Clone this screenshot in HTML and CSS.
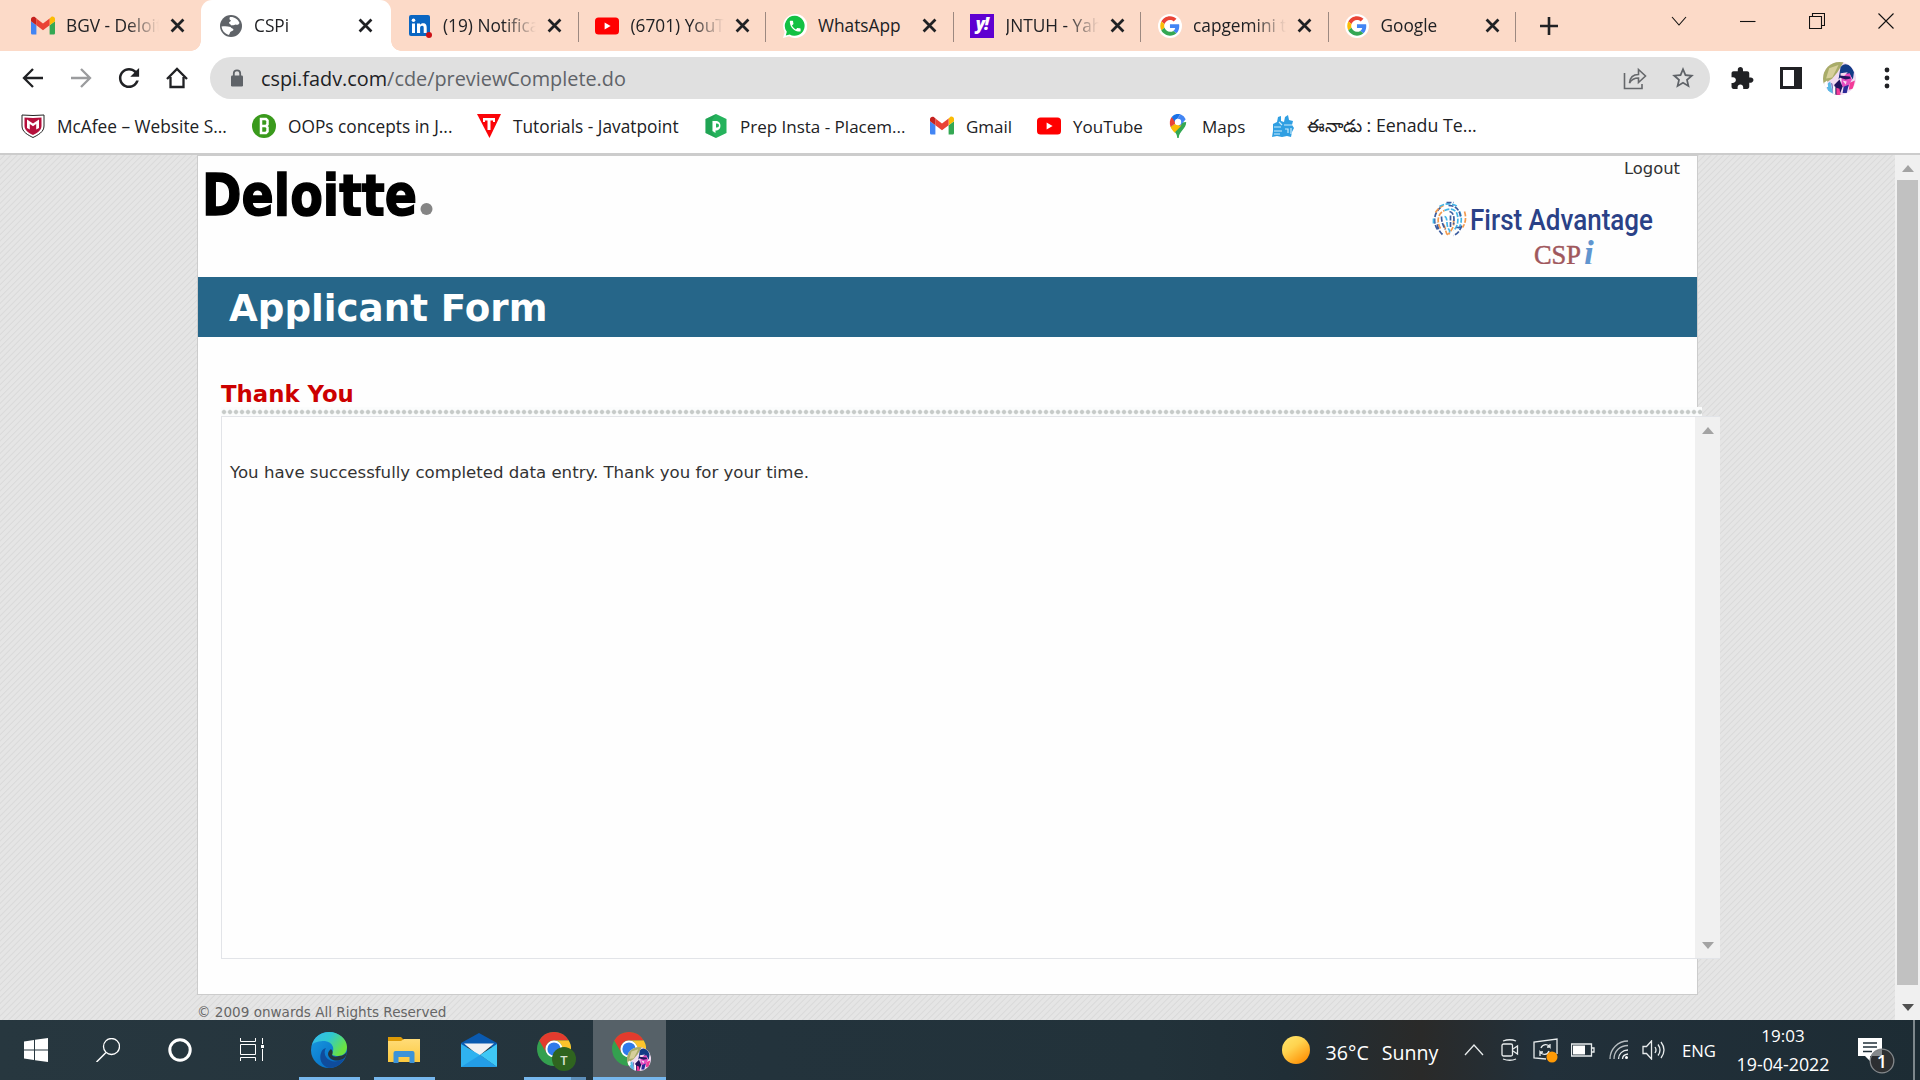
FILE: index.html
```html
<!DOCTYPE html>
<html lang="en">
<head>
<meta charset="utf-8">
<title>CSPi</title>
<link rel="stylesheet" href="styles.css">
</head>
<body>
<svg class="defs" aria-hidden="true">
  <defs>
    <linearGradient id="edge-blue" x1="0" y1="0" x2="1" y2="1"><stop offset="0" stop-color="#1b9de2"/><stop offset="1" stop-color="#0062be"/></linearGradient>
    <linearGradient id="edge-top" x1="0" y1="0" x2="1" y2=".5"><stop offset="0" stop-color="#35b8f0"/><stop offset=".5" stop-color="#30c8cf"/><stop offset="1" stop-color="#6be33f"/></linearGradient>
    <linearGradient id="sun" x1=".1" y1="0" x2=".8" y2="1"><stop offset="0" stop-color="#ffe46a"/><stop offset=".4" stop-color="#ffd34f"/><stop offset="1" stop-color="#ff8c00"/></linearGradient>
    <linearGradient id="folder" x1="0" y1="0" x2="0" y2="1"><stop offset="0" stop-color="#ffdc78"/><stop offset="1" stop-color="#fcc93f"/></linearGradient>
    <clipPath id="round"><circle cx="16" cy="16" r="16"/></clipPath>
    <symbol id="gmail" viewBox="0 0 24 24">
      <path fill="#4285f4" d="M1.6 20.6h3.8v-9.3L0 7.2V19c0 .9.7 1.6 1.6 1.6z"/>
      <path fill="#34a853" d="M18.6 20.6h3.8c.9 0 1.6-.7 1.6-1.6V7.2l-5.4 4.1z"/>
      <path fill="#fbbc04" d="M18.6 4.6v6.7L24 7.2V5.1c0-2-2.3-3.2-3.9-2z"/>
      <path fill="#ea4335" d="M5.4 11.3V4.6L12 9.5l6.6-4.9v6.7L12 16.3z"/>
      <path fill="#c5221f" d="M0 5.1v2.1l5.4 4.1V4.6L3.9 3.1C2.300 2 0 3.100 0 5.100z"/>
    </symbol>
    <symbol id="youtube" viewBox="0 0 24 24"><rect y="3.600" width="24" height="16.800" rx="3.500" fill="#f00"/><path fill="#fff" d="M9.600 8.500v7l6-3.500z"/></symbol>
    <symbol id="google" viewBox="0 0 48 48">
      <circle cx="24" cy="24" r="24" fill="#fff"/>
      <g transform="translate(4.500 4.500) scale(.81)">
      <path fill="#ea4335" d="M24 9.500c3.540 0 6.710 1.220 9.210 3.600l6.850-6.850C35.900 2.380 30.470 0 24 0 14.620 0 6.510 5.380 2.560 13.220l7.980 6.190C12.430 13.720 17.740 9.500 24 9.500z"/>
      <path fill="#4285f4" d="M46.980 24.550c0-1.570-.15-3.090-.38-4.550H24v9.020h12.940c-.58 2.960-2.260 5.480-4.780 7.180l7.730 6c4.510-4.180 7.090-10.360 7.090-17.650z"/>
      <path fill="#fbbc05" d="M10.530 28.590c-.48-1.450-.76-2.990-.76-4.590s.27-3.140.76-4.590l-7.980-6.190C.92 16.460 0 20.120 0 24c0 3.880.92 7.540 2.560 10.780l7.970-6.190z"/>
      <path fill="#34a853" d="M24 48c6.480 0 11.930-2.130 15.890-5.810l-7.730-6c-2.150 1.450-4.920 2.300-8.160 2.300-6.260 0-11.570-4.220-13.470-9.910l-7.980 6.190C6.510 42.620 14.620 48 24 48z"/>
      </g>
    </symbol>
    <symbol id="close" viewBox="0 0 16 16"><path d="M3 3l10 10M13 3L3 13" stroke="#202124" stroke-width="2.300" fill="none"/></symbol>
    <symbol id="avatar" viewBox="0 0 32 32">
      <g clip-path="url(#round)">
        <rect width="32" height="32" fill="#f1dcf2"/>
        <path fill="#a8ac68" d="M0 0h20l-6 10-5 6-9 6z"/>
        <path fill="#d6cf9b" d="M6 6l9-3-6 12-6 1z"/>
        <path fill="#123b86" d="M17 5c4-6 11-2 13 5l-1 7-3-5-8 1-3 4z"/>
        <path fill="#e54cc0" d="M18 12l8-1 2 6-4 8-6-1z"/>
        <path fill="#f6d9ef" d="M17 11l7-1-3 3-4 2zM19 18l4 1-1 3z"/>
        <path fill="#21145f" d="M16 13l10 1 1 2-5 1-6-2zM11 22l5-5 3 7-3 8h-5z"/>
        <path fill="#59b8e6" d="M3 22l4-3 3 13H6z"/>
        <path fill="#2b2a98" d="M8 20l2 12-1-11zM20 24l5-2-2 8h-4z"/>
        <path fill="#f43b98" d="M26 20l5-2-2 8-4 1zM13 25l3 1 1 6h-4z"/>
        <path fill="#fff" d="M1 20l3-2 1 6-3 1zM10 23l2 1v8h-2z"/>
      </g>
    </symbol>
    <symbol id="chrome" viewBox="0 0 36 36">
      <circle cx="18" cy="18" r="18" fill="#34a04f"/>
      <path fill="#e33b2e" d="M2.400 9A18 18 0 0 1 33.600 9H18a9 9 0 0 0-7.800 13.500z"/>
      <path fill="#fdc42c" d="M33.600 9A18 18 0 0 1 18 36l7.800-13.500A9 9 0 0 0 18 9z"/>
      <circle cx="18" cy="18" r="9" fill="#fff"/><circle cx="18" cy="18" r="7" fill="#2e7bea"/>
    </symbol>
  </defs>
</svg>

<header class="browser">
  <div class="tab-strip">
    <div class="tab first"><svg class="fav"><use href="#gmail"/></svg><span class="title">BGV - Deloitte</span><svg class="x"><use href="#close"/></svg></div>
    <div class="tab active"><svg class="fav" viewBox="0 0 24 24"><circle cx="12" cy="12" r="11" fill="#5f6368"/><path fill="#fff" d="M11 3c4-.5 8 2 9.500 6-1 2-2.500 2-4 1.500-1.500 1-3 .5-4 1-.5-1.500-2.500-1-2.500-3 .5-1 2-1 2-2-1.500-.5-2-2-1-3.500zM2.500 12.500c3-.5 6-.5 9 .5 1 1.500 3 1.500 3 3-1 1.500-3 1-3.500 2.500-.5 1.500-.5 2-1.500 2.500-4-1.500-6.500-4.500-7-8.500z"/></svg><span class="title">CSPi</span><svg class="x"><use href="#close"/></svg></div>
    <div class="tab ruled"><svg class="fav" viewBox="0 0 24 24"><rect x="1" y="1" width="21" height="21" rx="2" fill="#0a66c2"/><path fill="#fff" d="M4 9.500h3V19H4zM9 9.500h3v1.300c.6-1 1.700-1.600 3-1.600 3 0 3.700 2 3.700 4.600V19h-3v-4.700c0-1.200 0-2.500-1.600-2.500s-2 1.200-2 2.400V19H9z"/><circle cx="5.500" cy="6.200" r="1.800" fill="#fff"/><circle cx="21" cy="21" r="3" fill="#cc1016"/></svg><span class="title">(19) Notifications</span><svg class="x"><use href="#close"/></svg></div>
    <div class="tab ruled"><svg class="fav"><use href="#youtube"/></svg><span class="title">(6701) YouTube</span><svg class="x"><use href="#close"/></svg></div>
    <div class="tab ruled"><svg class="fav" viewBox="0 0 24 24"><path fill="#fff" d="M12 0a12 12 0 1 1-5.800 22.300L0 24l1.700-6A12 12 0 0 1 12 0z"/><path fill="#12c143" d="M12 1.800a10 10 0 1 1-5.300 18.700L2.800 21.400l1-3.700A10 10 0 0 1 12 1.800z"/><path fill="#fff" transform="translate(5 5) scale(.6)" d="M6.620 10.790c1.440 2.830 3.760 5.140 6.590 6.590l2.200-2.200c.27-.27.67-.36 1.020-.24 1.120.37 2.330.57 3.570.57.55 0 1 .45 1 1V20c0 .55-.45 1-1 1-9.390 0-17-7.610-17-17 0-.55.45-1 1-1h3.500c.55 0 1 .45 1 1 0 1.250.2 2.450.57 3.570.11.35.03.74-.25 1.020z"/></svg><span class="title whole">WhatsApp</span><svg class="x"><use href="#close"/></svg></div>
    <div class="tab ruled"><span class="fav yahoo">y!</span><span class="title">JNTUH - Yahoo</span><svg class="x"><use href="#close"/></svg></div>
    <div class="tab ruled"><svg class="fav"><use href="#google"/></svg><span class="title">capgemini test</span><svg class="x"><use href="#close"/></svg></div>
    <div class="tab ruled"><svg class="fav"><use href="#google"/></svg><span class="title">Google</span><svg class="x"><use href="#close"/></svg></div>
    <div class="new-tab"><svg width="20" height="20" viewBox="0 0 20 20"><path d="M10 1v18M1 10h18" stroke="#202124" stroke-width="2.600"/></svg></div>
    <div class="window-controls">
      <svg viewBox="0 0 16 16"><path d="M1 4l7 8 7-8"/></svg>
      <svg viewBox="0 0 16 16"><path d="M0 8.500h15.500"/></svg>
      <svg viewBox="0 0 16 16"><path d="M.5 3.500h12v12H.5zM3.500 3.500v-3h12v12h-3"/></svg>
      <svg viewBox="0 0 16 16"><path d="M.5 .5l15 15M15.500 .5l-15 15"/></svg>
    </div>
  </div>

  <div class="toolbar">
    <nav class="nav-buttons">
      <svg viewBox="0 0 24 24"><path d="M22 12H3M12 3l-9 9 9 9" fill="none" stroke="#202124" stroke-width="2.300"/></svg>
      <svg viewBox="0 0 24 24"><path d="M2 12h19M12 3l9 9-9 9" fill="none" stroke="#9b9c9e" stroke-width="2.300"/></svg>
      <svg viewBox="2.500 2.500 19 19"><path fill="#202124" d="M17.650 6.350C16.200 4.900 14.210 4 12 4c-4.420 0-7.990 3.580-7.990 8s3.570 8 7.990 8c3.730 0 6.840-2.550 7.730-6h-2.080c-.82 2.330-3.040 4-5.650 4-3.310 0-6-2.690-6-6s2.690-6 6-6c1.660 0 3.140.69 4.220 1.780L13 11h7V4l-2.350 2.350z"/></svg>
      <svg viewBox="0 0 24 24"><path d="M2 13L12 3l10 10M5.500 11v10h13V11" fill="none" stroke="#202124" stroke-width="2.300"/></svg>
    </nav>
    <div class="omnibox">
      <svg class="lock" viewBox="0 0 14 18"><rect x="1" y="6.500" width="12" height="11" rx="1.300" fill="#5f6368"/><path d="M3.800 7V4.500a3.200 3.200 0 0 1 6.400 0V7" fill="none" stroke="#5f6368" stroke-width="1.800"/></svg>
      <span class="url"><b>cspi.fadv.com</b>/cde/previewComplete.do</span>
      <svg class="ob-icon" viewBox="0 0 24 24"><path d="M1.500 7v15.500H19V18M6.500 17C7 11 11 8.500 15.500 8.500v-5L22.500 10l-7 6.500v-4.500C11.500 12 8.500 13.500 6.500 17z" fill="none" stroke="#66686b" stroke-width="1.600"/></svg>
      <svg class="ob-icon" viewBox="1 1 22 22"><path fill="#5f6368" d="M22 9.240l-7.190-.62L12 2 9.190 8.630 2 9.240l5.460 4.730L5.820 21 12 17.270 18.180 21l-1.630-7.030L22 9.240zM12 15.400l-3.760 2.270 1-4.280-3.320-2.880 4.380-.38L12 6.100l1.710 4.040 4.380.38-3.320 2.880 1 4.280L12 15.400z"/></svg>
    </div>
    <div class="actions">
      <svg viewBox="1.500 0 23 23"><path fill="#202124" d="M20.500 11H19V7c0-1.100-.9-2-2-2h-4V3.500C13 2.120 11.880 1 10.500 1S8 2.120 8 3.500V5H4c-1.100 0-1.990.9-1.990 2v3.800H3.500c1.490 0 2.700 1.210 2.700 2.700s-1.210 2.700-2.700 2.700H2V20c0 1.100.9 2 2 2h3.800v-1.500c0-1.490 1.210-2.700 2.700-2.700 1.490 0 2.700 1.210 2.700 2.700V22H17c1.100 0 2-.9 2-2v-4h1.500c1.380 0 2.500-1.120 2.500-2.500S21.880 11 20.500 11z"/></svg>
      <svg viewBox="0 0 24 24"><path fill="#202124" d="M1 1h22v22H1zM4 4v16h11V4z" fill-rule="evenodd"/></svg>
      <svg class="me"><use href="#avatar"/></svg>
      <svg viewBox="0 0 24 24"><g fill="#202124"><circle cx="12" cy="4" r="2.400"/><circle cx="12" cy="12" r="2.400"/><circle cx="12" cy="20" r="2.400"/></g></svg>
    </div>
  </div>

  <div class="bookmarks">
    <a><svg viewBox="0 0 24 24"><path fill="#fff" stroke="#222" d="M1 1q11 1 22 0v11c0 6-6 9-11 11.500C7 21 1 18 1 12z"/><path fill="#b5103c" d="M3.500 3.500q8.500.8 17 0V12c0 4.500-4.500 7-8.500 9-4-2-8.500-4.500-8.500-9z"/><path fill="#fff" d="M6 14V5.500l6 4 6-4V14l-2.800 1.500V10L12 12.200 8.800 10v5.500z"/></svg><span>McAfee – Website S...</span></a>
    <a><svg viewBox="0 0 24 24"><circle cx="12" cy="12" r="12" fill="#3a9a1c"/><path fill="none" stroke="#fff" stroke-width="2.500" d="M9 5h5l1.500 1.500v4L14 12l1.500 1.500v4L14 19H9zM9 12h5"/></svg><span>OOPs concepts in J...</span></a>
    <a><svg viewBox="0 0 24 24"><path fill="#fb0509" d="M0 0h24L12.500 24z"/><path fill="#fff" d="M6 4h12v4h-2V6.500h-2.500V16h-3V6.500H8V8H6z"/></svg><span>Tutorials - Javatpoint</span></a>
    <a><svg viewBox="0 0 24 24"><path fill="#25b35c" d="M12 0l10.500 5v14L12 24 1.500 19V5z"/><path fill="#178a45" d="M12 0L1.500 5v14L12 24l-4-6V6z" opacity=".35"/><path fill="#fff" fill-rule="evenodd" d="M8.500 7h4.500a5 5 0 0 1 0 9.500h-1.500V19l-3-2zm3.500 2.500v4h1a2 2 0 0 0 0-4z"/></svg><span class="snug">Prep Insta - Placem...</span></a>
    <a><svg><use href="#gmail"/></svg><span class="snug">Gmail</span></a>
    <a><svg><use href="#youtube"/></svg><span class="snug">YouTube</span></a>
    <a><svg viewBox="0 0 24 24"><path fill="#34a853" d="M4.500 12.500C7 17 11 18 11.300 24h1.400c.3-7 7.500-9 7.500-16L12 9z"/><path fill="#fbbc04" d="M4.500 12.700L16 6l-1 6-6.500 6.800c-1.500-2-3-3.800-4-6.100z"/><path fill="#ea4335" d="M5.700 3L12 8l-7.500 4.700C3.300 9.600 3.600 5.500 5.700 3z"/><path fill="#1a73e8" d="M5.700 3a8.400 8.400 0 0 1 8.800-2.700L9 8z"/><path fill="#4285f4" d="M14.500.3a8.400 8.400 0 0 1 5.200 5L14 12 9 8z"/><circle cx="12" cy="8" r="3.200" fill="#fff"/></svg><span class="snug">Maps</span></a>
    <a><svg viewBox="0 0 24 24"><path fill="#2f9fe2" d="M2 10l4-2 1-5 3-1v5l3 1 1-5 3-2 1 5 4 1-1 4 2 3-2 4-1 5-4-1-5 1-5-1-5 1 1-6z"/><g fill="none" stroke="#c9ecfb" stroke-width="1.200"><path d="M3 13h7M3 17h8M3 20h6M8 8l3 3M13 11h8M14 15h3v4M20 14v6"/></g></svg><span class="telugu">ఈనాడు : Eenadu Te...</span></a>
  </div>
</header>

<div class="viewport">
  <main class="page">
    <section class="sheet">
      <div class="masthead">
        <svg class="deloitte" width="240" height="50" viewBox="0 0 240 50"><text x="-1" y="45" textLength="215" lengthAdjust="spacingAndGlyphs">Deloitte</text><circle cx="223.500" cy="39" r="6" fill="#858585"/></svg>
        <div class="right">
          <a class="logout">Logout</a>
          <svg class="fadv" width="230" height="67" viewBox="0 0 230 67">
            <g fill="none" stroke-width="1.700" stroke-dasharray="5 1.500" transform="translate(-1.500 1.500)">
              <path stroke="#3b5c9f" d="M8 31a13 15 0 0 1 3-22M13 36a15 15 0 0 1-5-12M32 27a12 14 0 0 1-8 10"/>
              <path stroke="#f39a4d" d="M6 14a16 16 0 0 1 8-7M11 30c-4-7-3-15 4-18M24 22c1 8-3 10-5 14M35 13c2 6 1 12-2 16M14 26c3 4 1 8 5 11"/>
              <path stroke="#43b5e8" d="M15 12c6-3 12-1 13 5s0 12-4 15M10 8c6-4 14-3 18 0M15 18c3 0 2 6 3 10s3 3 2 6M30 13c3 6 2 13-1 17M4 20v6"/>
              <path stroke="#3b5c9f" d="M19 7c8 0 11 5 12 11M20 13c5 1 5 8 4 13M12 18c0 6 2 10 4 13M21 17v12M17 4h7M27 29h6"/>
            </g>
            <text class="fa" x="39" y="33" textLength="183" lengthAdjust="spacingAndGlyphs">First Advantage</text>
            <text class="csp" x="103" y="66.500" textLength="47" lengthAdjust="spacingAndGlyphs">CSP</text>
            <text class="csp-i" x="153" y="68">i</text>
          </svg>
        </div>
      </div>
      <h1>Applicant Form</h1>
      <h2>Thank You</h2>
      <div class="dots"></div>
      <div class="panel">
        <p>You have successfully completed data entry. Thank you for your time.</p>
        <div class="scrollbar idle"><svg viewBox="0 0 12 7"><path d="M6 0l6 7H0z"/></svg><svg viewBox="0 0 12 7"><path d="M0 0h12L6 7z"/></svg></div>
      </div>
    </section>
    <footer>© 2009 onwards All Rights Reserved</footer>
  </main>
  <div class="scrollbar"><svg viewBox="0 0 12 7"><path d="M6 0l6 7H0z"/></svg><div class="thumb"></div><svg class="dark" viewBox="0 0 12 7"><path d="M0 0h12L6 7z"/></svg></div>
</div>

<footer class="taskbar">
  <div class="apps">
    <div><svg width="24" height="24" viewBox="0 0 24 24"><path fill="#fff" d="M0 3.400l10-1.400v9.500H0zM11 1.800L24 0v11.500H11zM0 12.500h10V22L0 20.600zM11 12.500h13V24l-13-1.800z"/></svg></div>
    <div><svg width="24" height="24" viewBox="0 0 24 24"><circle cx="15.500" cy="8.500" r="8" fill="none" stroke="#fff" stroke-width="1.300"/><path d="M10 14.500L.5 24" stroke="#fff" stroke-width="1.500"/></svg></div>
    <div><svg width="26" height="26" viewBox="0 0 26 26"><circle cx="13" cy="13" r="10.200" fill="none" stroke="#fff" stroke-width="3"/></svg></div>
    <div><svg width="24" height="24" viewBox="0 0 24 24"><path fill="none" stroke="#fff" d="M.5 0v3.500h15V0M.5 6.500h15v10H.5zM.5 23v-3.500h15V23M22.500 0v6M22.500 11v12"/><path fill="#fff" d="M21 7h3v3h-3z"/></svg></div>
    <div class="running"><svg width="36" height="36" viewBox="0 0 36 36"><circle cx="18" cy="18" r="18" fill="url(#edge-blue)"/><path fill="#0f4c9c" d="M14 18c-2 8 6 13 13 11 3-1 5-2 6-2-3 6-9 9-15 9-8-2-10-10-8-15 1-3 2-4 5-5z"/><path fill="url(#edge-top)" d="M1 13C3 5 10 0 18 0c10 0 18 7 18 15 0 6-4 9-9 9-4 0-7-1-6-3 3-4 1-11-7-12C8 9 3 10 1 13z"/><path fill="#25353e" d="M20 17c2 2 2 4 1 6 1 2 4 2 7 1 4 0 6-2 8-4-1 4-2 6-4 7-3 1-7 3-12 0-4-3-4-7 0-10z"/></svg></div>
    <div class="running"><svg width="32" height="28" viewBox="0 0 32 28"><path fill="#dd9a06" d="M0 1h13l3 3-2 3H0z"/><path fill="url(#folder)" d="M0 5h13l3-2h16v23H0z"/><path fill="#3c93d8" d="M5.500 27V17a2 2 0 0 1 2-2h17a2 2 0 0 1 2 2v10h-5v-6h-11v6z"/></svg></div>
    <div><svg width="36" height="34" viewBox="0 0 36 34"><path fill="#0a5ab0" d="M0 10L18 0l18 10v4H0z"/><path fill="#f1f1f3" d="M3 10.500h30L18 23z"/><path fill="#2fb2f0" d="M0 11l19 11 17 12H0z"/><path fill="#3fc8f5" d="M36 11L19 22l17 12z"/><path fill="#1c90e0" d="M0 34h36L19 22z" opacity=".6"/></svg></div>
    <div class="running stacked"><svg width="39" height="39" viewBox="0 0 39 39"><use href="#chrome" width="34" height="34"/><circle cx="27" cy="27" r="12" fill="#2f641f"/><text x="27" y="32.500" text-anchor="middle">T</text></svg></div>
    <div class="running current"><svg width="39" height="39" viewBox="0 0 39 39"><use href="#chrome" width="34" height="34"/><use href="#avatar" x="15" y="15" width="24" height="24"/></svg></div>
  </div>
  <div class="tray">
    <svg width="28" height="28" viewBox="0 0 28 28"><circle cx="14" cy="14" r="14" fill="url(#sun)" stroke="none"/></svg>
    <div class="weather"><span>36°C</span><span>Sunny</span></div>
    <svg width="20" height="12" viewBox="0 0 20 12"><path d="M1 11l9-10 9 10"/></svg>
    <svg width="18" height="22" viewBox="0 0 18 22"><rect x="1" y="5" width="10.500" height="12" rx="1.500"/><path d="M12 10l4.500-3v8L12 12M2 2q7-2.500 13 0M2 20q7 2.500 13 0"/></svg>
    <svg width="26" height="26" viewBox="0 0 26 26"><path d="M13 22L1 21V5l23-3v15M8 11a5 5 0 0 1 9-1v-3M17 10h-3M16 14a5 5 0 0 1-9 1v4M7 15h3"/><circle cx="19" cy="20" r="5.500" fill="#ff9a05" stroke="none"/></svg>
    <svg width="24" height="14" viewBox="0 0 24 14"><path d="M.5 1h20v12H.5zM21 5h2v4h-2"/><path fill="#fff" stroke="none" d="M2 2.500h12v9H2z"/></svg>
    <svg width="20" height="20" viewBox="0 0 20 20"><path opacity=".75" d="M1 19C1 9 9 1 19 1M5 19C5 11 11 5.500 19 5.500"/><path d="M9.500 19c0-5 4-9 9.500-9M13.500 19c0-2.500 2-4.500 5.500-5"/><circle cx="17.500" cy="17.500" r="1.500" fill="#fff" stroke="none"/></svg>
    <svg width="24" height="20" viewBox="0 0 24 20"><path d="M1 6.500h3.500L9.500 1v18l-5-5.500H1zM13 7q2 3 0 6M16 4.500q4 5.500 0 11M19 2q6 8 0 16"/></svg>
    <span class="lang">ENG</span>
    <div class="clock"><span class="time">19:03</span><span>19-04-2022</span></div>
    <svg class="notes" width="38" height="40" viewBox="0 0 38 40"><path fill="#fff" stroke="none" d="M1 4h24v18H13v5l-5-5H1z"/><path stroke="#22313a" d="M6 9h14M6 13h14M6 17.500h9"/><circle cx="25" cy="27" r="11.800" fill="#2d2f31" stroke="#85898c"/><path fill="#85898c" stroke="none" d="M25 15.500V22H14q3-6 11-6.500z"/><text x="25" y="33.500" text-anchor="middle">1</text></svg>
    <div class="show-desktop"></div>
  </div>
</footer>
</body>
</html>
```
FILE: styles.css
```css
* { box-sizing: border-box; }
body {
  margin: 0;
  width: 1920px;
  height: 1080px;
  overflow: hidden;
  display: flex;
  flex-direction: column;
  font-family: "Open Sans", "Noto Sans", sans-serif;
  font-size: 17.3px;
  color: #202124;
  background: #fff;
}
svg { display: block; flex: none; }
.defs { position: absolute; width: 0; height: 0; }

/* tab strip */
.browser { height: 155px; border-bottom: 2px solid #ccc; }
.tab-strip { display: flex; height: 51px; padding-left: 14px; background: #fcdac8; }
.tab { position: relative; display: flex; flex: none; align-items: center; width: 187.500px; padding-left: 17.500px; }
.first { padding-left: 16.500px; }
.fav { width: 24px; height: 24px; margin-right: 11.500px; }
.title {
  width: 93px;
  overflow: hidden;
  white-space: nowrap;
  -webkit-mask-image: linear-gradient(90deg, #000 65%, transparent);
  mask-image: linear-gradient(90deg, #000 65%, transparent);
}
.whole { -webkit-mask-image: none; mask-image: none; }
.x { width: 19px; height: 19px; margin-left: 9px; }
.ruled::after { content: ""; position: absolute; right: -1px; top: 12px; width: 1px; height: 30px; background: #9c8880; }
.active { background: #fff; border-radius: 11px 11px 0 0; width: 190px; margin-left: -.5px; margin-right: -1px; }
.active::before, .active::after { content: ""; position: absolute; bottom: 0; width: 10px; height: 10px; }
.active::before { left: -10px; background: radial-gradient(circle at 0 0, transparent 9.500px, #fff 10px); }
.active::after { right: -10px; background: radial-gradient(circle at 100% 0, transparent 9.500px, #fff 10px); }
.yahoo { background: #5f01d1; color: #fff; font-weight: 800; font-size: 17px; line-height: 19px; text-align: center; font-style: italic; letter-spacing: -1px; }
.new-tab { display: flex; align-items: center; width: 60px; padding-left: 24px; }
.window-controls { display: flex; gap: 53px; margin: 13px 26px 0 auto; }
.window-controls svg { width: 16px; height: 16px; fill: none; stroke: #111; stroke-width: 1.100; }

/* toolbar */
.toolbar { display: flex; align-items: center; height: 54px; }
.nav-buttons { display: flex; gap: 24px; padding-left: 21px; }
.nav-buttons svg { width: 24px; height: 24px; }
.omnibox { display: flex; align-items: center; width: 1500px; height: 42px; margin-left: 21px; padding: 0 15px 0 20px; border-radius: 21px; background: #e0e0e0; }
.lock { width: 14px; height: 18px; }
.url { flex: 1; margin-left: 17px; font-size: 19.850px; color: #5f6368; }
.url b { font-weight: 400; color: #202124; }
.ob-icon { width: 24px; height: 24px; margin-left: 24px; }
.actions { display: flex; align-items: center; gap: 24px; margin-left: 21px; }
.actions svg { width: 24px; height: 24px; }
.actions .me { width: 33px; height: 33px; margin: 0 -4.500px; }

.bookmarks { display: grid; grid-template-columns: 231px 225px 227px 226px 107px 129px 105px 240px; align-items: center; height: 42px; padding-left: 21px; }
.bookmarks a { display: flex; align-items: center; gap: 12px; height: 24px; white-space: nowrap; }
.bookmarks svg { width: 24px; height: 24px; }
.snug { font-size: 17px; }
.telugu { font-size: 17.800px; padding-top: 2px; }

/* page */
.viewport {
  display: flex;
  height: 865px;
  overflow: hidden;
  background: repeating-linear-gradient(-45deg, #e5e5e5 0 2.600px, #dbdbdb 3.300px 3.700px, #e5e5e5 4.420px);
}
.page { flex: 1; padding-left: 197px; font-family: "DejaVu Sans", sans-serif; color: #333; }
.sheet { width: 1501px; height: 840px; border: 1px solid #ccc; background: #fefefe; }
.masthead { display: flex; justify-content: space-between; height: 121px; }
.deloitte { margin-top: 14px; margin-left: 5px; overflow: visible; }
.deloitte text { font: bold 57px "DejaVu Sans", sans-serif; fill: #000; stroke: #000; stroke-width: 1.500px; }
.right { display: flex; flex-direction: column; width: 266px; }
.logout { height: 41px; padding: 3px 17px 0 0; text-align: right; font-size: 16.400px; }
.fa { font: 500 30px Roboto, sans-serif; fill: #2a4187; }
.csp { font: 28px "Liberation Serif", serif; fill: #a0575c; stroke: #a0575c; stroke-width: .5px; }
.csp-i { font: italic bold 35px "Liberation Serif", serif; fill: #6095cf; }
h1 { margin: 0; height: 60px; padding-left: 31px; line-height: 62.500px; font-size: 37.200px; color: #fff; background: #266689; }
h2 { margin: 43px 0 0 23px; height: 27px; line-height: 28px; font-size: 22.800px; color: #c00; }
.dots { width: 1481px; height: 9px; margin-left: 23px; background: radial-gradient(circle at 3px 5px, #c6cac8 1.500px, #e6e9e8 2.200px, #fbfcfc 2.900px) 0 0 / 6px 9px #fbfcfc; }
.panel { display: flex; justify-content: space-between; width: 1499px; height: 543px; margin-left: 23px; border: 1px solid #e2e4e8; border-right: 0; background: #fefefe; }
.panel p { margin: 45px 0 0 8px; line-height: 22px; font-size: 16.600px; }
.scrollbar { display: flex; flex-direction: column; align-items: center; justify-content: space-between; width: 25px; padding: 10px 0 9px; background: #f0f0f0; }
.scrollbar svg { width: 12px; height: 7px; fill: #a3a3a3; }
.scrollbar .dark { fill: #505050; }
.thumb { width: 21px; height: 805px; margin-bottom: 11px; background: #c1c1c1; }
.page footer { height: 30px; padding-top: 9px; font-size: 13.550px; line-height: 16px; color: #666; }

/* taskbar */
.taskbar { display: flex; justify-content: space-between; height: 60px; background: linear-gradient(90deg, #27373f, #23333c 40%, #22323a 60%, #202e36 67%, #2a2a29 74%, #22303a 80%, #1d2c34); color: #fff; }
.apps { display: grid; grid-template-columns: 72px 72px 72px 76px 75px 75px 75px 76px 73px; }
.apps div { position: relative; display: flex; align-items: center; justify-content: center; }
.apps div:nth-child(4) { padding-right: 4px; }
.apps div:nth-child(n+8) { padding-left: 3px; padding-top: 3px; }
.apps div:nth-child(5), .apps div:nth-child(6), .apps div:nth-child(7) { padding-right: 1px; }
.running::after { content: ""; position: absolute; left: 7px; right: 7px; bottom: 0; height: 3px; background: #76b7ed; }
.stacked::after { background: linear-gradient(90deg, #76b7ed 47px, #5d8fba 47px); }
.apps .current { background: #566168; }
.current::after { left: 0; right: 0; }
.apps text { font: 600 13px "Open Sans", sans-serif; fill: #d8e3d2; }
.tray { display: grid; grid-template-columns: 28px 144px 40px 32px 40px 34px 38px 32px 58px 110px 75px 7px; align-items: center; justify-items: center; }
.tray svg { fill: none; stroke: #e8eced; stroke-width: 1.300; }
.weather { display: flex; gap: 13px; padding-top: 4px; font-size: 19.600px; }
.lang { font-size: 16.700px; }
.clock { display: flex; flex-direction: column; align-items: center; font-size: 17.800px; line-height: 28px; }
.time { font-size: 17px; }
.notes text { font: 600 18px "Open Sans", sans-serif; fill: #fff; stroke: none; }
.tray .notes { margin-top: 8px; }
.show-desktop { justify-self: start; width: 2px; height: 60px; background: #7d878c; }
```
